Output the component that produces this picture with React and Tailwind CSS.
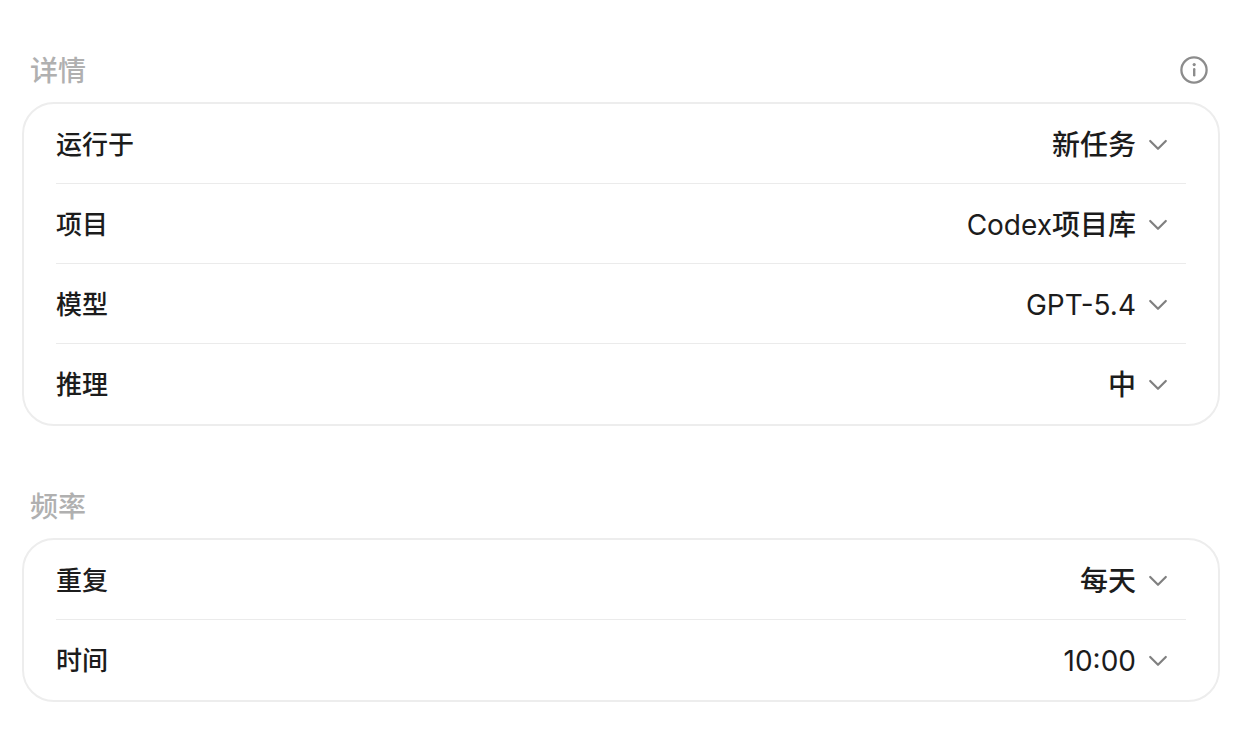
import { useState } from 'react';

const detailFields = [
  { id: 'target', label: '运行于', options: ['新任务', '当前任务'] },
  { id: 'project', label: '项目', options: ['Codex项目库'] },
  { id: 'model', label: '模型', options: ['GPT-5.4'] },
  { id: 'reasoning', label: '推理', options: ['中', '低', '高'] },
];

const scheduleFields = [
  { id: 'repeat', label: '重复', options: ['每天', '每周'] },
  { id: 'time', label: '时间', options: ['10:00', '11:00', '12:00'] },
];

function ChevronIcon() {
  return (
    <svg
      className="pointer-events-none absolute right-0 top-1/2 h-5 w-5 -translate-y-1/2 text-[#808080]"
      viewBox="0 0 20 20"
      fill="none"
      stroke="currentColor"
      aria-hidden="true"
    >
      <path strokeLinecap="round" strokeLinejoin="round" strokeWidth={2.2} d="M2.2 6l7.8 7.8 7.8-7.8" />
    </svg>
  );
}

function InfoIcon() {
  return (
    <svg className="h-7 w-7" viewBox="0 0 28 28" fill="none" stroke="currentColor" aria-hidden="true">
      <circle cx="14" cy="14" r="12.6" strokeWidth={2.3} />
      <circle cx="14.2" cy="8.6" r="1.6" fill="currentColor" stroke="none" />
      <path strokeLinecap="round" strokeWidth={2.4} d="M14.2 13.2v6" />
    </svg>
  );
}

function FieldRow({ field, value, onChange }) {
  return (
    <div className="flex h-20 items-center justify-between border-b border-[#ebebeb] pt-0.5 pr-[18px] last:border-transparent">
      <label htmlFor={field.id} className="text-[26px] leading-10 font-medium">
        {field.label}
      </label>
      <div className="relative">
        <select
          id={field.id}
          value={value}
          onChange={(e) => onChange(field.id, e.target.value)}
          className="field-sizing-content cursor-pointer appearance-none bg-transparent pr-8 text-right font-['Inter','Noto_Sans_CJK_SC_Medium','Noto_Sans_CJK_SC',sans-serif] text-[28px] leading-10 outline-none"
        >
          {field.options.map((option) => (
            <option key={option}>{option}</option>
          ))}
        </select>
        <ChevronIcon />
      </div>
    </div>
  );
}

function Section({ title, action, fields, values, onChange }) {
  return (
    <section>
      <div className="flex h-16 items-center justify-between pr-3 pl-2">
        <h2 className="pt-0.5 text-[28px] leading-10 font-medium text-[#b0b0b0]">{title}</h2>
        {action}
      </div>
      <div className="rounded-[32px] border-2 border-[#ededed] px-8">
        {fields.map((field) => (
          <FieldRow key={field.id} field={field} value={values[field.id]} onChange={onChange} />
        ))}
      </div>
    </section>
  );
}

export default function App() {
  const [values, setValues] = useState({
    target: '新任务',
    project: 'Codex项目库',
    model: 'GPT-5.4',
    reasoning: '中',
    repeat: '每天',
    time: '10:00',
  });

  const handleChange = (id, value) => {
    setValues((prev) => ({ ...prev, [id]: value }));
  };

  return (
    <main className="flex min-h-screen flex-col gap-12 bg-white pt-[38px] pr-[14px] pb-7 pl-[22px] font-['Inter','Noto_Sans_CJK_SC',sans-serif] text-[#1c1c1c]">
      <Section
        title="详情"
        fields={detailFields}
        values={values}
        onChange={handleChange}
        action={
          <button type="button" aria-label="说明" className="text-[#8c8c8c]">
            <InfoIcon />
          </button>
        }
      />
      <Section title="频率" fields={scheduleFields} values={values} onChange={handleChange} />
    </main>
  );
}
